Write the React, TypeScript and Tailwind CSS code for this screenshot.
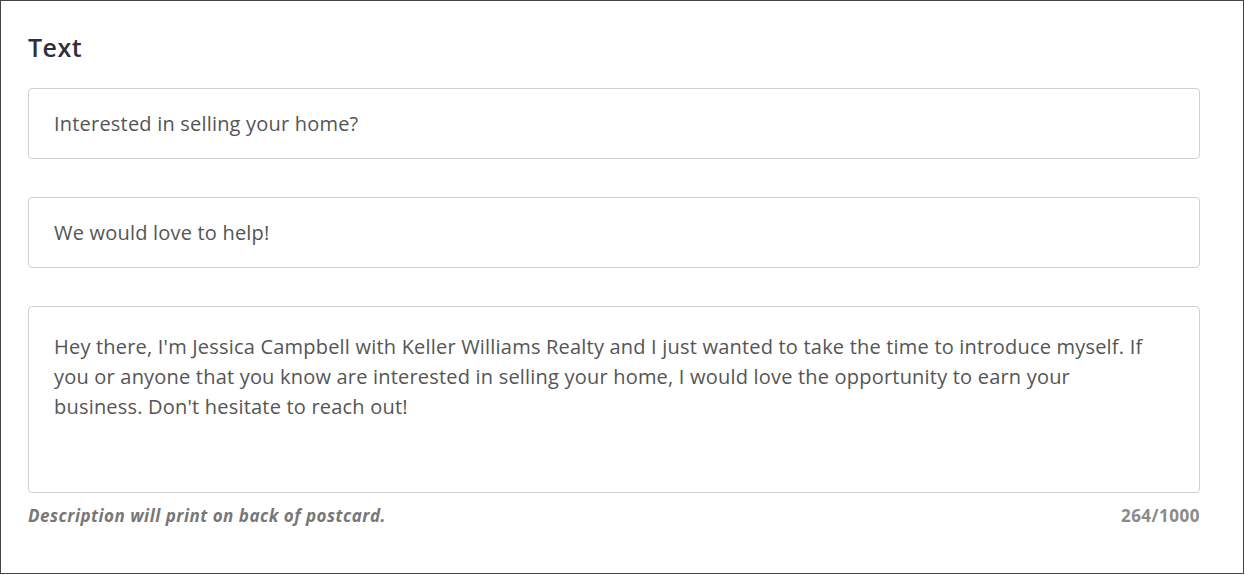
export default function App() {
  const body =
    "Hey there, I'm Jessica Campbell with Keller Williams Realty and I just wanted to take the time to introduce myself. If you or anyone that you know are interested in selling your home, I would love the opportunity to earn your business. Don't hesitate to reach out!"

  return (
    <div className="h-[575px] w-[1245px] bg-white font-['Open_Sans','Noto_Sans',sans-serif]">
      <div className="box-border h-[574px] w-[1244px] border border-[#444] pt-[30px] pl-[27px] pr-[43px]">
        <h2 className="text-[25px] leading-[32px] font-semibold tracking-[0.5px] text-[#2f2f3a]">Text</h2>

        <div className="mt-[25px] flex flex-col gap-[38px]">
          <div className="flex h-[71px] items-center rounded-[4px] border border-[#cdd1d6] px-[25px] text-[20px] tracking-[0.2px] text-[#555]">
            Interested in selling your home?
          </div>
          <div className="flex h-[71px] items-center rounded-[4px] border border-[#cdd1d6] px-[25px] text-[20px] tracking-[0.2px] text-[#555]">
            We would love to help!
          </div>
          <div className="h-[187px] rounded-[4px] border border-[#cdd1d6] pl-[25px] pr-[45px] pt-[25px] text-[20px] leading-[30px] tracking-[0.2px] text-[#555]">
            {body}
          </div>
        </div>

        <div className="mt-[10px] flex items-center justify-between">
          <span className="text-[17px] font-bold italic tracking-[0.5px] text-[#777]">
            Description will print on back of postcard.
          </span>
          <span className="text-[17px] font-bold tracking-[0.5px] text-[#8a8a8a]">264/1000</span>
        </div>
      </div>
    </div>
  )
}
